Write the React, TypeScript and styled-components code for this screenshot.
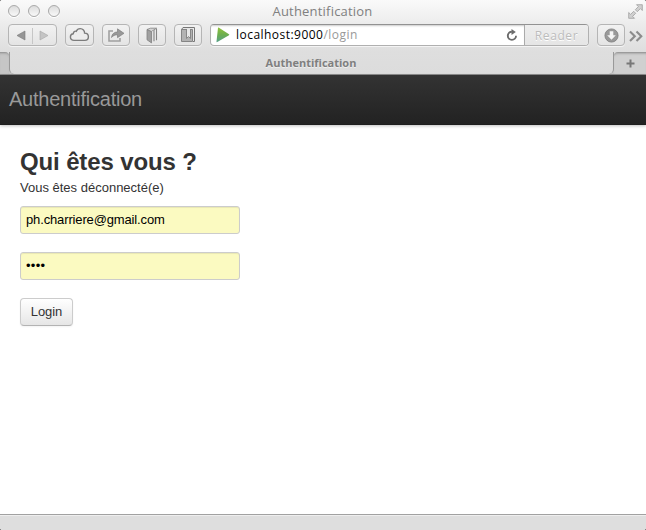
import React from 'react';
import styled, { createGlobalStyle } from 'styled-components';

const chromeFont = `"Open Sans", "Noto Sans", sans-serif`;
const pageFont = `"Liberation Sans", Arial, sans-serif`;

const GlobalStyle = createGlobalStyle`
  * { box-sizing: border-box; }
  html, body { margin: 0; padding: 0; background: #000; overflow: hidden; }
`;

const Window = styled.div`
  width: 646px;
  height: 530px;
  display: flex;
  flex-direction: column;
  overflow: hidden;
  border-radius: 2px;
  background: #fff;
`;

const Chrome = styled.header`
  height: 75px;
  flex: none;
  display: flex;
  flex-direction: column;
  background: linear-gradient(#fafafa 0, #ececec 24px, #dedede 52px, #dcdcdc 75px);
  border-bottom: 1px solid #8e8e8e;
  font-family: ${chromeFont};
`;

const TitleBar = styled.div`
  height: 24px;
  display: grid;
  grid-template-columns: 77px 1fr 83px;
  align-items: center;
  padding: 0 3px 0 8px;
`;

const Lights = styled.div`
  display: flex;
  gap: 8px;
  padding-bottom: 2px;
`;

const Light = styled.span`
  width: 12px;
  height: 12px;
  border: 1px solid #a9a9a9;
  border-radius: 50%;
  background: linear-gradient(#dcdcdc, #f9f9f9);
  box-shadow: 0 1px 0 #fff;
`;

const WindowTitle = styled.div`
  text-align: center;
  font-size: 13px;
  line-height: 22px;
  height: 24px;
  letter-spacing: 0.2px;
  color: #808080;
`;

const Expand = styled.div`
  display: flex;
  justify-content: flex-end;
  padding-bottom: 2px;
`;

const Toolbar = styled.div`
  height: 28px;
  flex: none;
  display: flex;
  align-items: flex-start;
  padding-left: 8px;
`;

const ToolButton = styled.div<{ $width: number; $gap?: number }>`
  width: ${(p) => p.$width}px;
  height: 22px;
  margin-right: ${(p) => p.$gap ?? 8}px;
  flex: none;
  display: flex;
  align-items: center;
  justify-content: center;
  border: 1px solid #b5b5b5;
  border-radius: 4px;
  background: linear-gradient(#f2f2f2, #e4e4e4);
  box-shadow: 0 1px 0 #f4f4f4;
`;

const AddressBar = styled.div`
  width: 379px;
  height: 22px;
  margin-right: 8px;
  flex: none;
  display: flex;
  border: 1px solid #b0b0b0;
  border-top-color: #929292;
  border-radius: 4px;
  overflow: hidden;
  background: #fff;
  box-shadow: 0 1px 0 #f4f4f4;
`;

const Address = styled.div`
  flex: 1;
  display: flex;
  align-items: center;
  padding: 0 6px 0 5px;
  box-shadow: inset 0 2px 2px -1px #ccc;
`;

const Url = styled.div`
  flex: 1;
  margin-left: 6px;
  font-size: 12px;
  line-height: 22px;
  letter-spacing: 0.47px;
  color: #000;
  span { color: #999; }
`;

const Reader = styled.div`
  width: 64px;
  border-left: 1px solid #aaa;
  background: linear-gradient(#ededed, #e5e5e5);
  color: #bcbcbc;
  font-size: 12px;
  line-height: 21px;
  letter-spacing: 0.6px;
  text-align: center;
  text-shadow: 0 1px 0 #fff;
`;

const TabStrip = styled.div`
  height: 22px;
  flex: none;
  display: flex;
  background: linear-gradient(#dedede 50%, #c8c8c8 50%);
`;

const TabCap = styled.div<{ $side: 'left' | 'right' }>`
  width: ${(p) => (p.$side === 'left' ? 9 : 32)}px;
  display: flex;
  align-items: center;
  justify-content: center;
  border-top: 1px solid #9b9b9b;
  border-radius: ${(p) => (p.$side === 'left' ? '0 4px 0 0' : '4px 0 0 0')};
  background: ${(p) => (p.$side === 'left' ? '#c6c6c6' : '#d0d0d0')};
  box-shadow: inset 0 2px 2px -1px #aaa;
`;

const ActiveTab = styled.div`
  flex: 1;
  border: solid #999;
  border-width: 0 1px;
  border-radius: 0 0 5px 5px;
  background: linear-gradient(#dedede, #dcdcdc);
  text-align: center;
  padding-right: 1px;
  font-size: 11px;
  font-weight: 700;
  line-height: 22px;
  color: #7f7f7f;
  text-shadow: 0 1px 0 #eee;
`;

const Navbar = styled.nav`
  height: 50px;
  flex: none;
  padding: 0 10px 0 9px;
  background: linear-gradient(#333, #222);
  box-shadow: 0 1px 3px rgba(0, 0, 0, 0.25), inset 0 -1px 0 rgba(0, 0, 0, 0.1);
  font: 20px/48px ${pageFont};
  letter-spacing: -0.24px;
  color: #999;
`;

const Page = styled.main`
  flex: 1;
  display: flex;
  flex-direction: column;
  align-items: flex-start;
  padding: 17px 20px 0;
  font-family: ${pageFont};
  color: #333;
`;

const Heading = styled.h1`
  margin: 0;
  font-size: 24px;
  line-height: 40px;
  letter-spacing: -0.13px;
  white-space: nowrap;
`;

const Message = styled.p`
  margin: -4px 0 8px;
  font-size: 13px;
  line-height: 20px;
`;

const Field = styled.input`
  width: 220px;
  height: 28px;
  margin: 0 0 18px;
  padding: 0 5px 2px;
  border: 1px solid #ccc;
  border-radius: 3px;
  outline: 0;
  background: #fbfac1;
  box-shadow: inset 0 1px 1px rgba(0, 0, 0, 0.075);
  color: #000;
  font: 13px ${pageFont};
  letter-spacing: -0.14px;

  &[type='password'] {
    letter-spacing: 0.3px;
  }
`;

const LoginButton = styled.button`
  width: 53px;
  height: 28px;
  padding: 0 0 2px;
  border: 1px solid #ccc;
  border-bottom-color: #b3b3b3;
  border-radius: 4px;
  background: linear-gradient(#fff, #e6e6e6);
  box-shadow: 0 1px 2px rgba(0, 0, 0, 0.05);
  color: #333;
  font: 13px ${pageFont};
  letter-spacing: -0.1px;
`;

const StatusBar = styled.footer`
  height: 16px;
  flex: none;
  border-top: 1px solid #a1a1a1;
  background: #dedede;
  box-shadow: inset 0 1px 0 #eee;
`;

export default function App() {
  return (
    <Window>
      <GlobalStyle />
      <Chrome>
        <TitleBar>
          <Lights><Light /><Light /><Light /></Lights>
          <WindowTitle>Authentification</WindowTitle>
          <Expand>
            <svg width="15" height="15" viewBox="0 0 15 15" fill="#d0d0d0" stroke="#a0a0a0" strokeWidth=".8">
              <path d="M8.5.7h5.8v5.8l-1.9-1.9-3.1 3.1-2-2 3.1-3.1Z" />
              <path d="M.7 8.5v5.8h5.8l-1.9-1.9 3.1-3.1-2-2-3.1 3.1Z" />
            </svg>
          </Expand>
        </TitleBar>
        <Toolbar>
          <ToolButton $width={49}>
            <svg width="47" height="20" viewBox="0 0 47 20">
              <path d="M8 10.5 16 6v9Z" fill="#959595" stroke="#7b7b7b" strokeWidth=".6" />
              <path d="M23.5 3v16" stroke="#c6c6c6" />
              <path d="M39 10.5 31 6v9Z" fill="#c4c4c4" stroke="#a6a6a6" strokeWidth=".6" />
            </svg>
          </ToolButton>
          <ToolButton $width={29}>
            <svg width="21" height="16" viewBox="0 0 21 16" fill="#ededed" stroke="#7c7c7c" strokeWidth="1.4">
              <path d="M5 13.4C2.8 13.4 1.4 12 1.4 10S3 6.8 4.3 6.7c0-1.8 1.5-2.9 3-2.4C8 2.5 9.3 1.6 11.2 1.6c2.7 0 4.5 2 4.4 4.5 2.4 0 3.8 1.5 3.8 3.6 0 2.2-1.5 3.7-3.6 3.7Z" />
            </svg>
          </ToolButton>
          <ToolButton $width={28}>
            <svg width="18" height="15" viewBox="0 0 18 15">
              <path d="M6 3H2v10h11v-3" fill="none" stroke="#a0a0a0" strokeWidth="1.6" />
              <path d="M4.5 9.5C5 5.6 7.5 4 10.5 4V.8L17 5.3l-6.5 4.4V6.8C8 6.8 6.2 7.6 4.5 9.5Z" fill="#999" stroke="#777" strokeWidth=".6" />
            </svg>
          </ToolButton>
          <ToolButton $width={28}>
            <svg width="12" height="17" viewBox="0 0 12 17" strokeLinejoin="round">
              <path d="m1 2.5 4.5 2v11.4L1 12.8Z" fill="#a0a0a0" stroke="#808080" strokeWidth=".8" />
              <path d="M1 2.5 4.5 1.2h6L5.5 4.5Z" fill="#d5d5d5" stroke="#808080" strokeWidth=".8" />
              <path d="M6.2 4.5 8 3.2v10.6l-1.8 1.5Z" fill="#e2e2e2" />
              <path d="M8 3v11.2M10.5 1.5v11.8" fill="none" stroke="#858585" strokeWidth="1.1" />
            </svg>
          </ToolButton>
          <ToolButton $width={28}>
            <svg width="16" height="18" viewBox="0 0 16 18">
              <path d="M1.5 3.5h11v12h-11Z" fill="#b2b2b2" stroke="#858585" />
              <path d="M1.5 3.5 3 1.5h11.5v14H13" fill="none" stroke="#777" />
              <path d="M3 2.5h10.5" stroke="#e5e5e5" />
              <path d="M6.5 3v9.5l2-2 2 2V3" fill="#e7e7e7" stroke="#7f7f7f" strokeWidth=".9" />
            </svg>
          </ToolButton>
          <AddressBar>
            <Address>
              <svg width="14" height="16" viewBox="0 0 14 16">
                <defs><linearGradient id="play" x2="0" y2="1"><stop stopColor="#91c23c" /><stop offset=".5" stopColor="#6cae50" /><stop offset="1" stopColor="#58a08b" /></linearGradient></defs>
                <path d="M2 .7Q2.5.3 3 .7L13 7.2q.6.5 0 1L1.3 15.1Q.4 15.5.5 14.5Z" fill="url(#play)" />
              </svg>
              <Url>localhost:9000<span>/login</span></Url>
              <svg width="12" height="13" viewBox="0 0 12 13">
                <path d="M10 6.8a4.1 4.1 0 1 1-4.1-4.1" fill="none" stroke="#6c6c6c" strokeWidth="1.9" />
                <path d="M5.5 0 9.8 2.9 5.5 6Z" fill="#6c6c6c" />
              </svg>
            </Address>
            <Reader>Reader</Reader>
          </AddressBar>
          <ToolButton $width={28} $gap={4}>
            <svg width="15" height="15" viewBox="0 0 15 15">
              <circle cx="7.5" cy="7.5" r="6.6" fill="#999" stroke="#808080" strokeWidth=".8" />
              <path d="M5.7 3.2h3.6v4h2.5l-4.3 4.5-4.3-4.5h2.5Z" fill="#f4f4f4" />
            </svg>
          </ToolButton>
          <svg width="15" height="24" viewBox="0 0 15 24" fill="none" stroke="#8c8c8c" strokeWidth="2.1">
            <path d="m1 7.5 4.8 4.7L1 17M7.5 7.5l4.8 4.7L7.5 17" />
          </svg>
        </Toolbar>
        <TabStrip>
          <TabCap $side="left" />
          <ActiveTab>Authentification</ActiveTab>
          <TabCap $side="right">
            <svg width="9" height="9" viewBox="0 0 9 9"><path d="M4.5.5v8M.5 4.5h8" stroke="#777" strokeWidth="2" /></svg>
          </TabCap>
        </TabStrip>
      </Chrome>
      <Navbar>Authentification</Navbar>
      <Page>
        <Heading>Qui êtes vous ?</Heading>
        <Message>Vous êtes déconnecté(e)</Message>
        <Field type="text" defaultValue="ph.charriere@gmail.com" />
        <Field type="password" defaultValue="play" />
        <LoginButton>Login</LoginButton>
      </Page>
      <StatusBar />
    </Window>
  );
}
